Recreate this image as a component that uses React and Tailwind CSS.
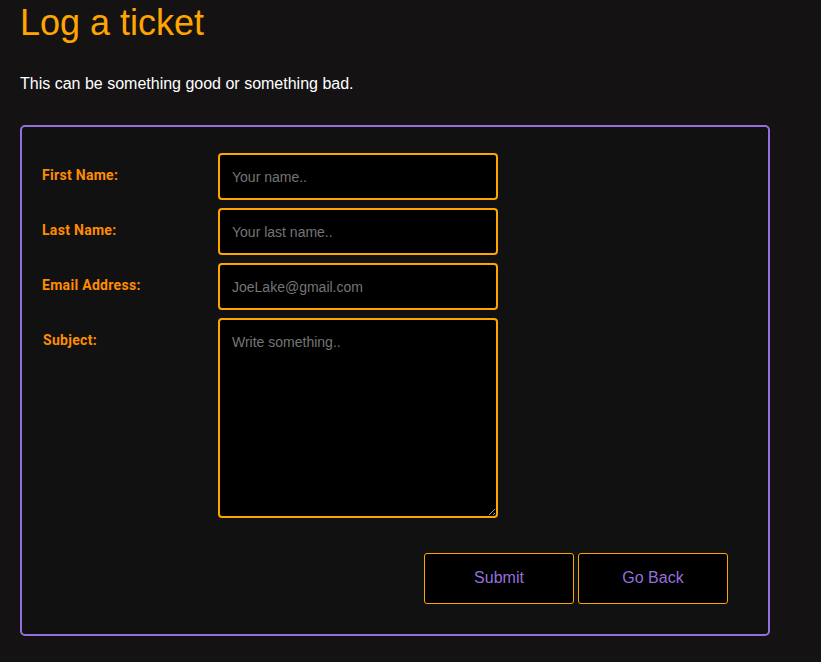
import React from 'react';

const fields = [
  { label: 'First Name:', placeholder: 'Your name..' },
  { label: 'Last Name:', placeholder: 'Your last name..' },
  { label: 'Email Address:', placeholder: 'JoeLake@gmail.com' },
];

const App = () => {
  return (
    <div className="min-h-[662px] bg-[#141213] px-5 font-['Liberation_Sans',Arial,sans-serif] text-white">
      {/* Heading */}
      <h1 className="pt-[2px] text-[36px] leading-[41px] text-[#ffa500]">Log a ticket</h1>
      <p className="mt-[32px] text-[16px] leading-[18px]">This can be something good or something bad.</p>

      {/* Ticket form */}
      <div className="mt-[32px] w-[750px] rounded-[5px] border-2 border-[#9370db] bg-[#121112] pt-[26px] pb-[30px] pl-5 pr-10">
        <div className="flex flex-col gap-2">
          {fields.map((f) => (
            <div key={f.label} className="flex">
              <label className="w-[176px] pt-[14px] font-['Roboto',sans-serif] text-[14px] font-bold leading-[16px] tracking-[0.3px] text-[#ff8c00]">
                {f.label}
              </label>
              <input
                type="text"
                placeholder={f.placeholder}
                className="h-[47px] w-[280px] rounded-[4px] border-2 border-[#ffa500] bg-black px-3 text-[14px] text-white outline-none placeholder:text-[#757575]"
              />
            </div>
          ))}
          <div className="flex">
            <label className="w-[176px] pt-[14px] pl-px font-['Roboto',sans-serif] text-[14px] font-bold leading-[16px] tracking-[0.3px] text-[#ff8c00]">
              Subject:
            </label>
            <textarea
              placeholder="Write something.."
              className="h-[200px] w-[280px] rounded-[4px] border-2 border-[#ffa500] bg-black px-3 pt-[14px] text-[14px] leading-[16px] text-white outline-none placeholder:text-[#757575]"
            />
          </div>
        </div>

        <div className="mt-[35px] flex justify-end gap-[4px]">
          <button className="h-[51px] w-[150px] rounded-[3px] border border-[#ffa500] bg-black pb-[1px] text-[16px] text-[#9370db]">
            Submit
          </button>
          <button className="h-[51px] w-[150px] rounded-[3px] border border-[#ffa500] bg-black pb-[1px] text-[16px] text-[#9370db]">
            Go Back
          </button>
        </div>
      </div>
    </div>
  );
};

export default App;
